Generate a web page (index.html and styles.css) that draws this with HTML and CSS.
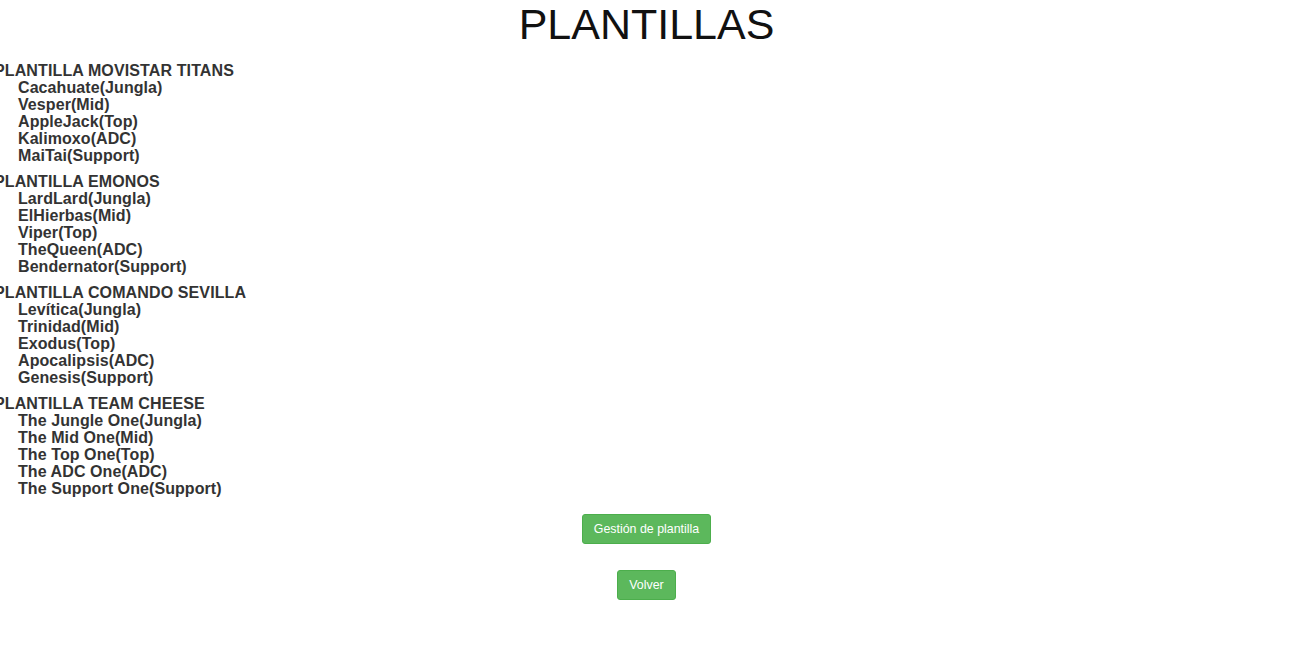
FILE: index.html
```html
<!DOCTYPE html>
<html lang="es">
<head>
<meta charset="utf-8">
<title>Plantillas</title>
<link rel="stylesheet" href="styles.css">
</head>
<body>
<h1 class="title">PLANTILLAS</h1>
<div class="teams">
  <section class="team">
    <h2 class="team-name">PLANTILLA MOVISTAR TITANS</h2>
    <ul class="players">
      <li>Cacahuate(Jungla)</li>
      <li>Vesper(Mid)</li>
      <li>AppleJack(Top)</li>
      <li>Kalimoxo(ADC)</li>
      <li>MaiTai(Support)</li>
    </ul>
  </section>
  <section class="team">
    <h2 class="team-name">PLANTILLA EMONOS</h2>
    <ul class="players">
      <li>LardLard(Jungla)</li>
      <li>ElHierbas(Mid)</li>
      <li>Viper(Top)</li>
      <li>TheQueen(ADC)</li>
      <li>Bendernator(Support)</li>
    </ul>
  </section>
  <section class="team">
    <h2 class="team-name">PLANTILLA COMANDO SEVILLA</h2>
    <ul class="players">
      <li>Levítica(Jungla)</li>
      <li>Trinidad(Mid)</li>
      <li>Exodus(Top)</li>
      <li>Apocalipsis(ADC)</li>
      <li>Genesis(Support)</li>
    </ul>
  </section>
  <section class="team">
    <h2 class="team-name">PLANTILLA TEAM CHEESE</h2>
    <ul class="players">
      <li>The Jungle One(Jungla)</li>
      <li>The Mid One(Mid)</li>
      <li>The Top One(Top)</li>
      <li>The ADC One(ADC)</li>
      <li>The Support One(Support)</li>
    </ul>
  </section>
</div>
<div class="actions">
  <button class="btn" type="button">Gestión de plantilla</button>
  <button class="btn" type="button">Volver</button>
</div>
</body>
</html>
```
FILE: styles.css
```css
html, body {
  margin: 0;
  padding: 0;
  background: #fff;
}
body {
  font-family: "Liberation Sans", Arial, sans-serif;
  color: #333;
}
.title {
  margin: 0;
  font-size: 43px;
  font-weight: normal;
  color: #111;
  text-align: center;
  line-height: 48px;
}
.teams {
  display: flex;
  flex-direction: column;
  gap: 9px;
  margin-top: 14px;
}
.team-name {
  margin: 0 0 0 -6px;
  font-size: 16px;
  font-weight: bold;
  line-height: 17px;
  letter-spacing: 0.12px;
  color: #333;
}
.players {
  list-style: none;
  margin: 0;
  padding: 0 0 0 18px;
  font-size: 16px;
  font-weight: bold;
  line-height: 17px;
  letter-spacing: 0.08px;
}
.actions {
  display: flex;
  flex-direction: column;
  align-items: center;
  gap: 26px;
  margin-top: 17px;
}
.btn {
  font-family: "Liberation Sans", Arial, sans-serif;
  font-size: 12.4px;
  line-height: 18px;
  height: 30px;
  padding: 5px 11px;
  color: #fff;
  background: #5cb85c;
  border: 1px solid #4cae4c;
  border-radius: 3px;
}
```
